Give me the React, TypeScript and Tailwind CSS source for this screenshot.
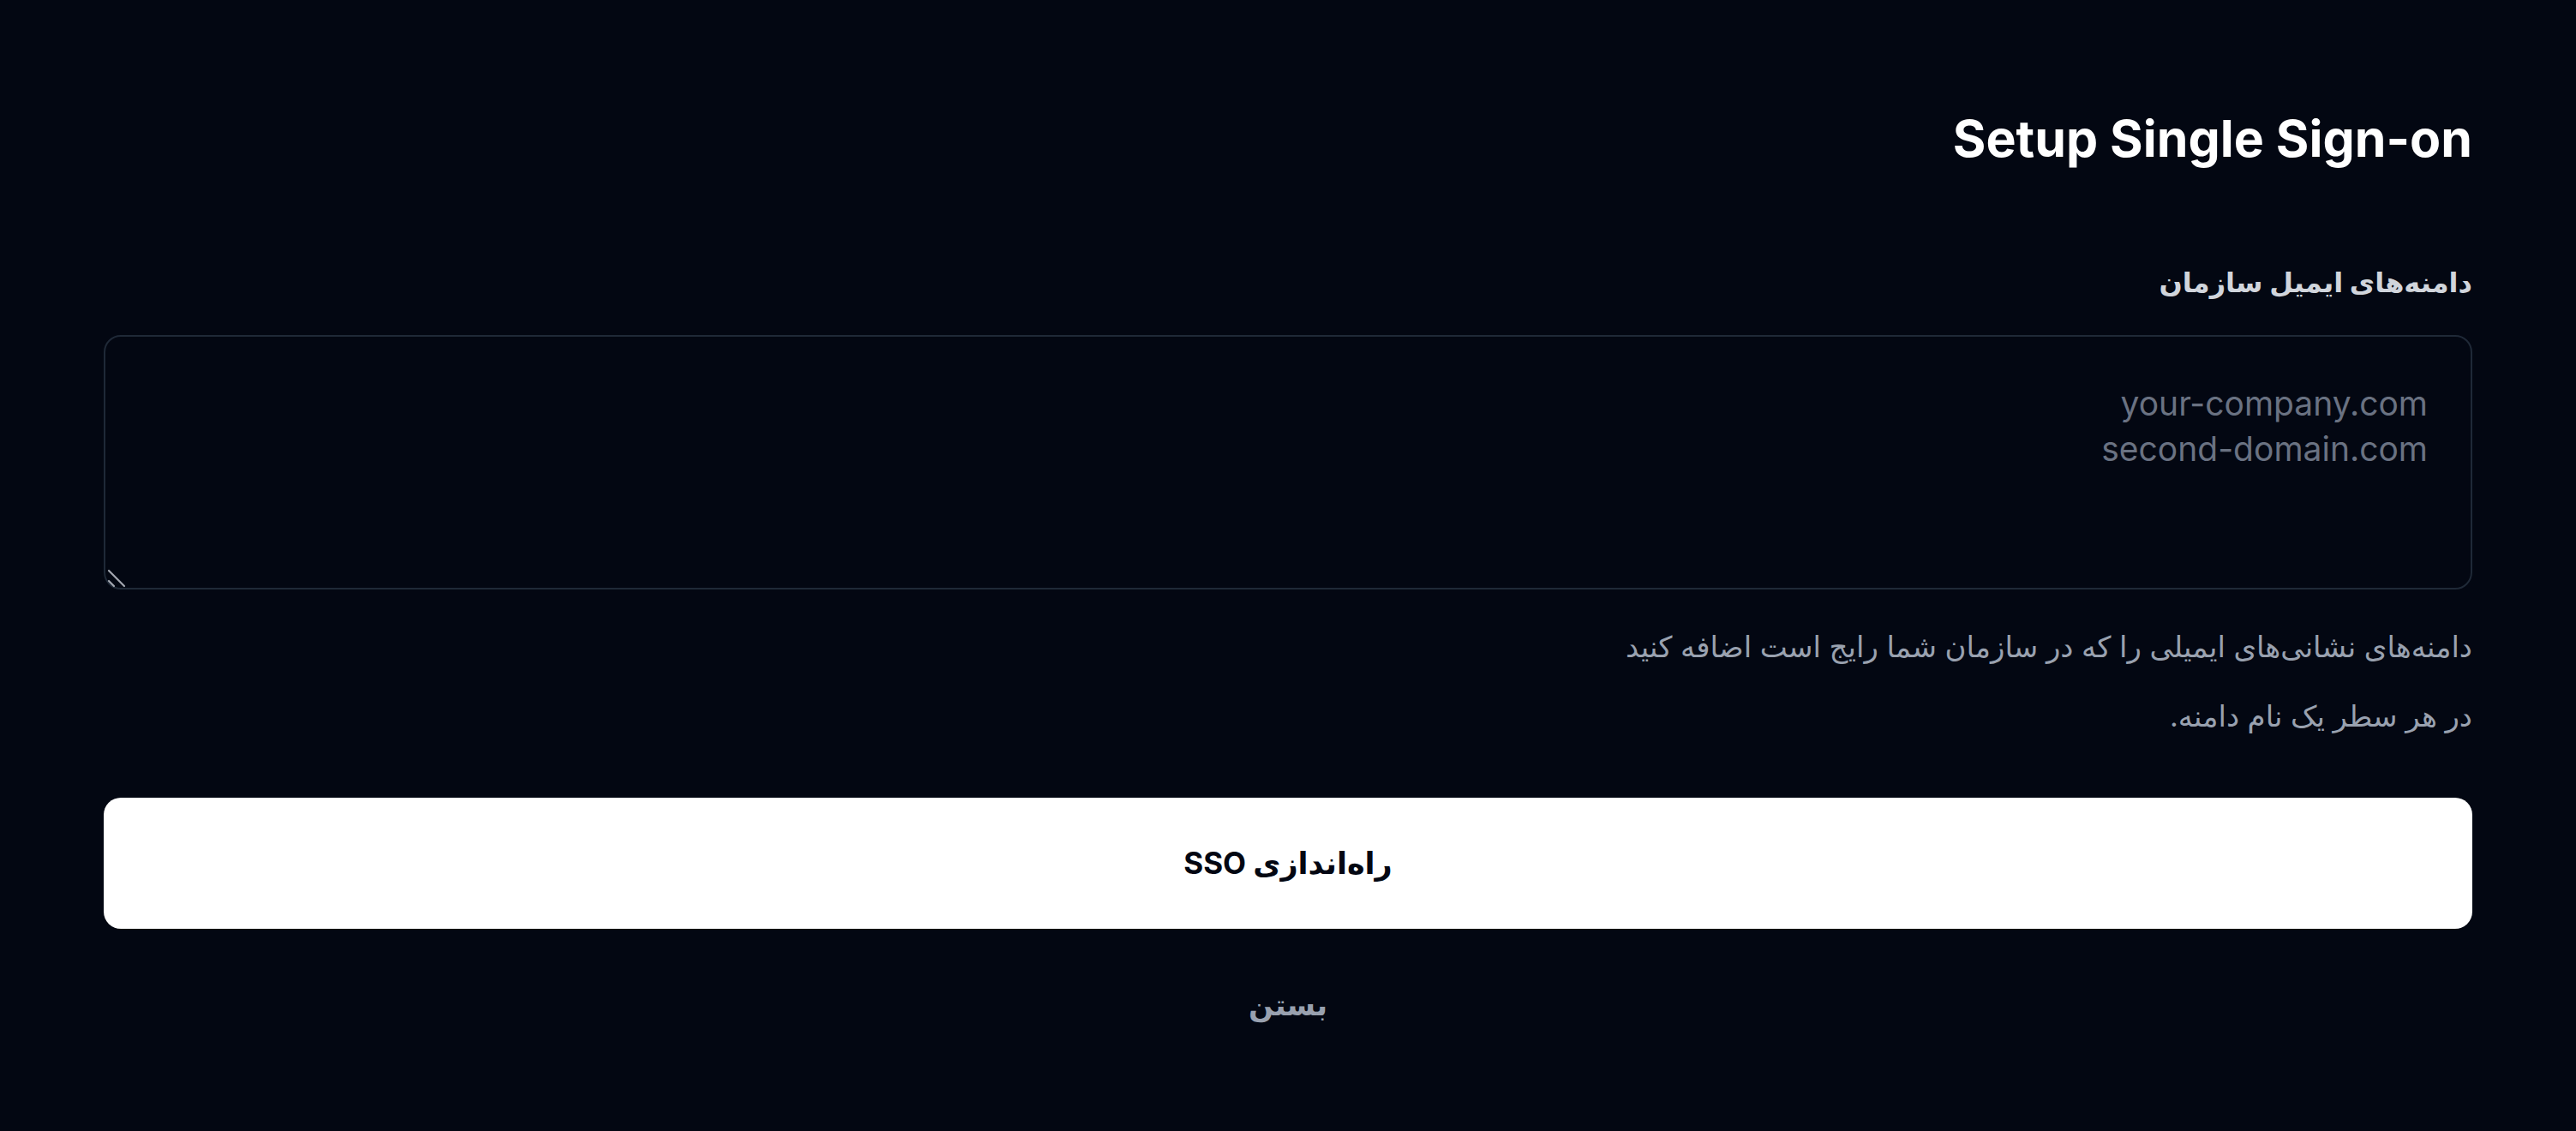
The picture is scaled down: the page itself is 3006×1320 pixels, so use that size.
export default function App() {
  return (
    <div
      dir="rtl"
      className="min-h-[1320px] bg-[#030712] px-[121px] pt-[128px] font-['Inter','DejaVu_Sans',sans-serif]"
    >
      <h1 className="text-[59px] font-bold leading-[68px] text-white">
        Setup Single Sign-on
      </h1>

      <label
        htmlFor="domains"
        className="mt-[110px] block text-[32px] font-bold leading-[48px] text-gray-300"
      >
        دامنه‌های ایمیل سازمان
      </label>

      <div className="relative mt-[37px]">
        <textarea
          id="domains"
          dir="rtl"
          placeholder={"your-company.com\nsecond-domain.com"}
          className="block h-[297px] w-full resize-none rounded-[20px] border-2 border-[#1f2937] bg-[#030712] px-[50px] pt-[51px] pb-[24px] text-[39px] leading-[53px] text-white outline-none placeholder:text-gray-500"
        />
        {/* resize grip, bottom-left like an rtl textarea */}
        <svg
          className="pointer-events-none absolute bottom-[2px] left-[4px] h-[22px] w-[22px]"
          viewBox="0 0 22 22"
          aria-hidden="true"
        >
          <path
            d="M2 2L20 20M2 14L8 20"
            stroke="#a3a7b0"
            strokeWidth="2.2"
            strokeLinecap="round"
          />
        </svg>
      </div>

      <div className="mt-[43px] space-y-[33px] text-[34px] leading-[48px] text-gray-400">
        <p>دامنه‌های نشانی‌های ایمیلی را که در سازمان شما رایج است اضافه کنید</p>
        <p>در هر سطر یک نام دامنه.</p>
      </div>

      <button
        type="button"
        className="mt-[71px] flex h-[153px] w-full items-center justify-center rounded-[20px] bg-white text-[35px] font-bold text-[#030712]"
      >
        راه‌اندازی SSO
      </button>

      <div className="mt-[65px] flex justify-center">
        <button
          type="button"
          className="text-[34px] font-bold leading-[48px] text-gray-400"
        >
          بستن
        </button>
      </div>
    </div>
  );
}
